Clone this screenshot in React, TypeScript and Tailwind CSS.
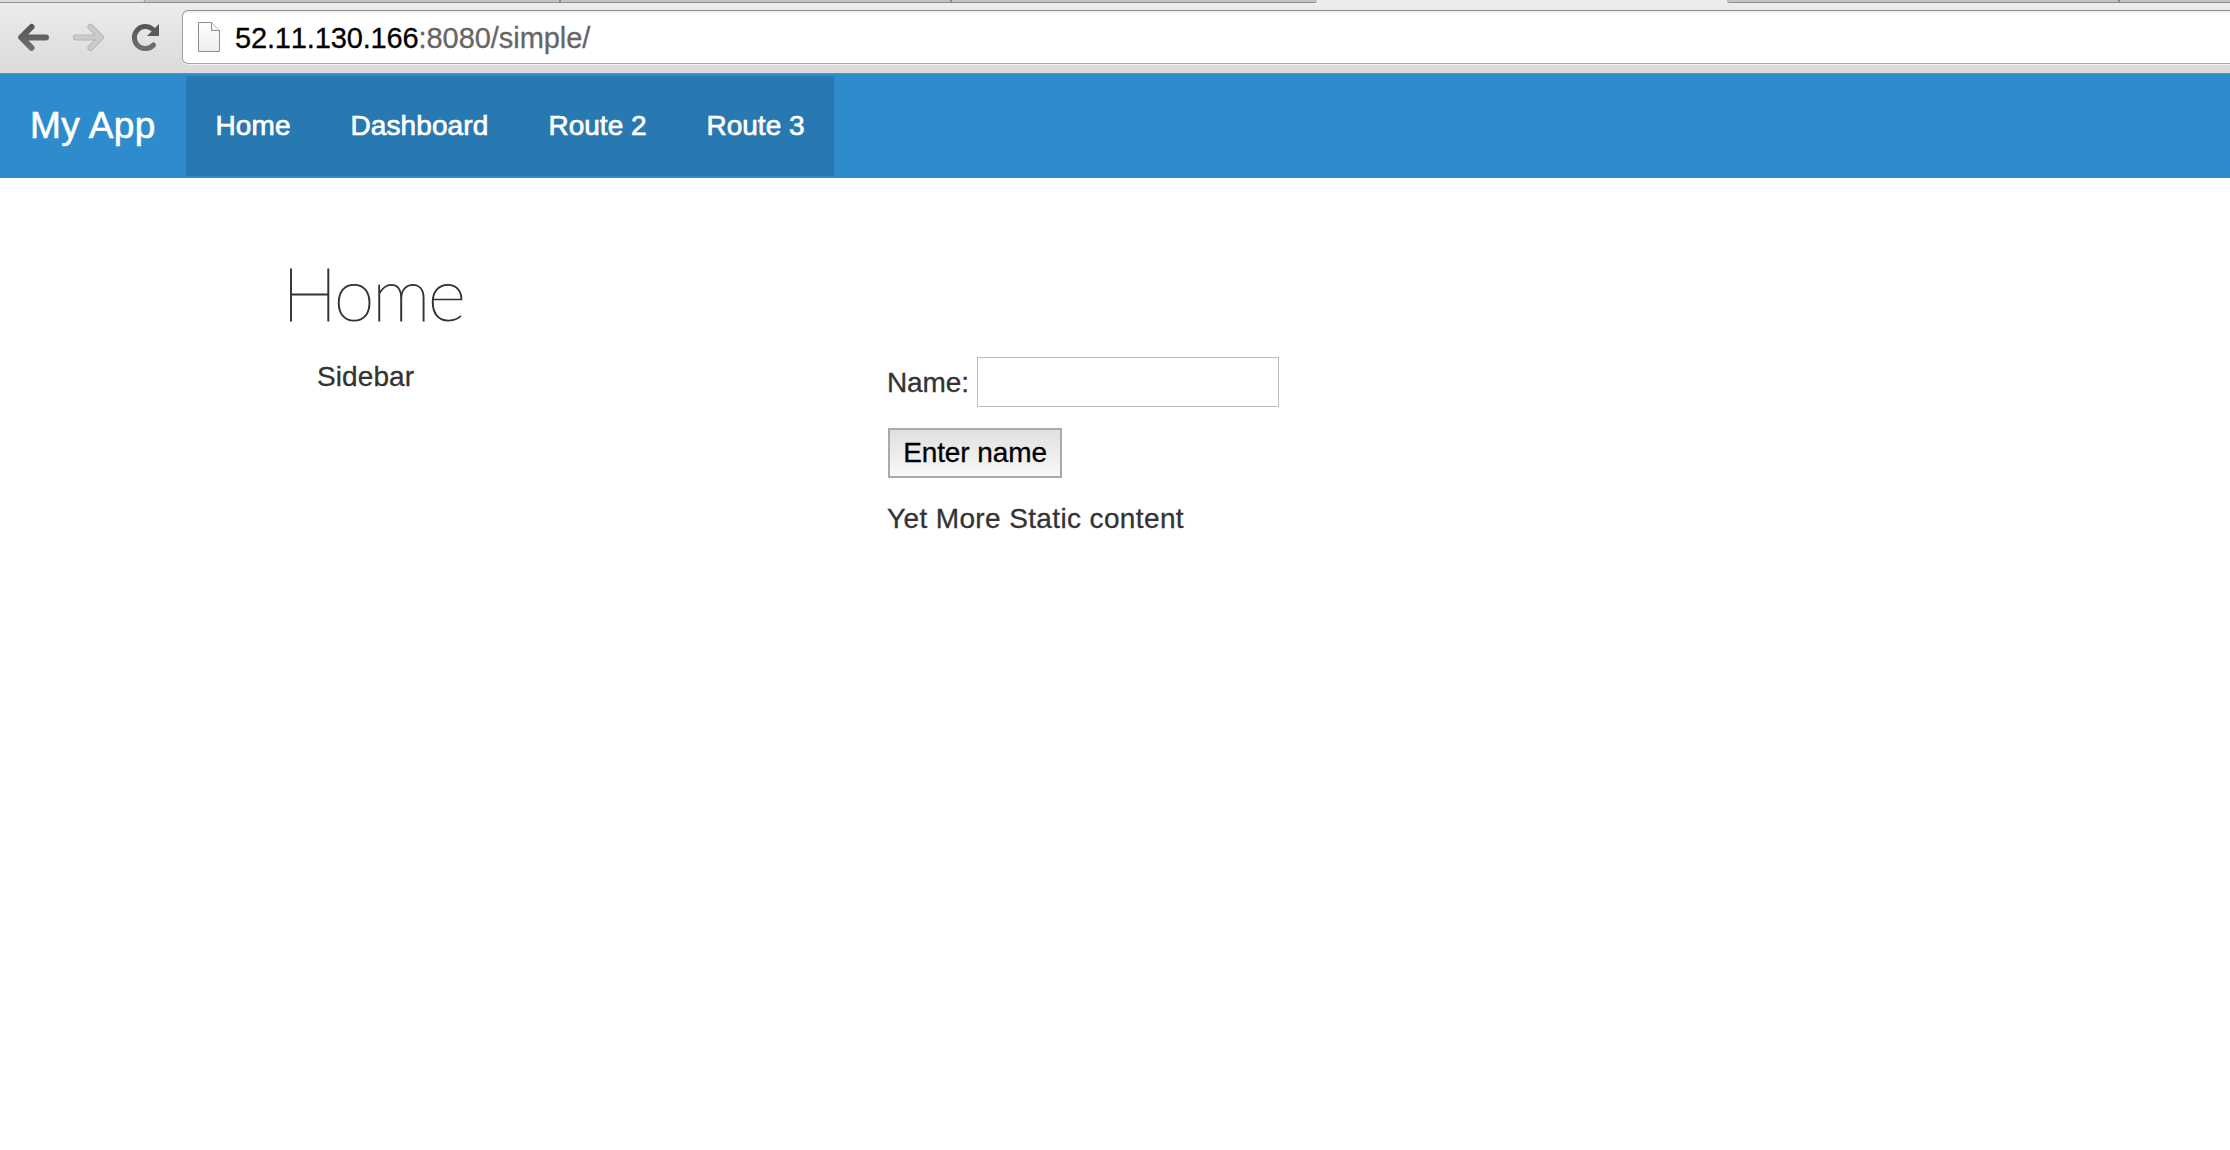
function Toolbar() {
  return (
    <div className="relative h-[74px] border-b border-[#8b8381] bg-linear-to-b from-[#ededed] to-[#dadada]">
      <div className="absolute inset-x-0 top-0 flex h-[3px] overflow-hidden">
        <div className="flex h-[3px] w-[1317px] overflow-hidden rounded-br-[4px] border-b border-[#8d8d8d] bg-[#c4c4c4]">
          <div className="w-[145px] rounded-br-[3px] border-r border-[#8d8d8d] bg-[#dcdcdc]" />
          <div className="w-[414px] bg-[#c4c4c4]" />
          <div className="w-[2px] bg-[#8d8d8d]" />
          <div className="w-[389px] bg-[#c4c4c4]" />
          <div className="w-[2px] bg-[#8d8d8d]" />
        </div>
        <div className="w-[410px]" />
        <div className="flex flex-1 rounded-bl-[4px] border-b border-[#8d8d8d] bg-[#c4c4c4]">
          <div className="w-[391px]" />
          <div className="w-[2px] bg-[#8d8d8d]" />
        </div>
      </div>
      <div className="flex pt-[10px]">
        <svg width="182" height="54" viewBox="0 10 182 54" className="shrink-0" fill="none">
          <defs>
            <linearGradient id="dark" x1="0" y1="24" x2="0" y2="51" gradientUnits="userSpaceOnUse">
              <stop stopColor="#555" />
              <stop offset="1" stopColor="#707070" />
            </linearGradient>
          </defs>
          <path d="M31.5 27 L21.2 37.4 L31.5 47.8 M22 37.4 H46" stroke="url(#dark)" strokeWidth="6" strokeLinecap="round" strokeLinejoin="round" />
          <path d="M90.5 27 L100.8 37.4 L90.5 47.8 M100 37.4 H76" stroke="#b2b2b2" strokeWidth="6" strokeLinecap="round" strokeLinejoin="round" />
          <path d="M90.5 27 L100.8 37.4 L90.5 47.8 M99.5 37.4 H76" stroke="#cbcbcb" strokeWidth="4.2" strokeLinecap="round" strokeLinejoin="round" />
          <path d="M153.5 45 A11 11 0 1 1 152.5 29.2" stroke="url(#dark)" strokeWidth="5" strokeLinecap="round" />
          <path d="M159 24 V36 H147 Z" fill="#595959" />
        </svg>
        <div className="flex h-[54px] flex-1 items-center rounded-l-[6px] border border-r-0 border-t-[#8f8f8f] border-b-[#a6a6a6] border-l-[#a0a0a0] bg-white shadow-[inset_0_2px_0_#f0f0f0,0_1px_0_#f0f0f0]">
          <svg width="24" height="32" viewBox="0 0 24 32" className="ml-[14px]">
            <defs>
              <linearGradient id="page" x1="0" y1="0" x2="0" y2="1">
                <stop stopColor="#fff" />
                <stop offset="1" stopColor="#ededed" />
              </linearGradient>
            </defs>
            <path d="M1.5 1.5 H14.5 L22.5 9.5 V30.5 H1.5 Z" fill="url(#page)" stroke="#8c8c8c" />
            <path d="M14.5 1.5 V9.5 H22.5" fill="#f4f4f4" stroke="#8c8c8c" />
          </svg>
          <span className="ml-[14px] pt-[2px] text-[29px] leading-[34px] tracking-[-0.05px] whitespace-pre text-[#666] [font-kerning:none] [-webkit-text-stroke:0.3px_currentColor]">
            <span className="tracking-[-0.15px] text-black">52.11.130.166</span>:8080/simple/
          </span>
        </div>
      </div>
    </div>
  );
}

function NavBar() {
  return (
    <nav className="flex h-[104px] items-center bg-[#2e8ccd] text-white">
      <a className="w-[186px] pl-[30px] text-[37px] leading-[100px] tracking-[0.4px] whitespace-nowrap [-webkit-text-stroke:0.6px_white]">My App</a>
      <div className="flex h-[100px] w-[648px] bg-[#2878b1] text-[28px] leading-[100px] whitespace-nowrap [-webkit-text-stroke:0.7px_white]">
        <a className="w-[135px] pl-[29.5px] tracking-[0.1px]">Home</a>
        <a className="w-[198px] pl-[29.5px] tracking-[0.1px]">Dashboard</a>
        <a className="w-[158px] pl-[29.5px]">Route 2</a>
        <a className="pl-[29.5px]">Route 3</a>
      </div>
    </nav>
  );
}

export default function App() {
  return (
    <div className="min-h-[1150px] bg-white font-['Liberation_Sans',Arial,sans-serif] text-[#333]">
      <Toolbar />
      <NavBar />
      <main className="pl-[287px] pt-[71px]">
        <h1 className="-ml-[5px] h-[95px] font-['Lato',sans-serif] text-[74px] leading-[88px] font-thin tracking-[-2.5px] [-webkit-text-stroke:1px_currentColor]">
          Home
        </h1>
        <div className="flex text-[28px] leading-[40px] [-webkit-text-stroke:0.3px_currentColor]">
          <div className="w-[600px] pt-[13px] pl-[30px] tracking-[0.1px]">Sidebar</div>
          <div className="pt-[13px]">
            <label className="flex h-[50px] items-center whitespace-nowrap">
              <span className="w-[90px] pt-px tracking-[-0.1px]">Name:</span>
              <input className="h-[50px] w-[302px] border border-[#bdbdbd] bg-white px-2 outline-none" />
            </label>
            <button className="mt-[21px] ml-px flex h-[50px] w-[174px] items-center justify-center border-2 border-[#aaa] bg-linear-to-b from-[#e0e0e0] to-[#f8f8f8] tracking-[-0.1px] whitespace-nowrap text-black">
              Enter name
            </button>
            <p className="mt-[21px] tracking-[0.37px]">Yet More Static content</p>
          </div>
        </div>
      </main>
    </div>
  );
}
